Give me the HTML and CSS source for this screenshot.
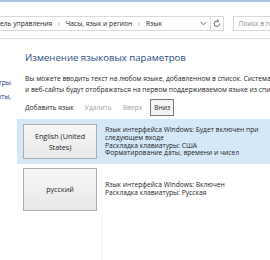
FILE: index.html
```html
<!DOCTYPE html>
<html>

<head>
    <title>Язык</title>
    <meta charset="utf-8">
    <link rel="stylesheet" href="styles.css">
</head>

<body>
    <div class="win-frame"></div>
    <div class="win-nav">
        <div class="win-address">
            <span class="win-crumbs">ель управления <i>›</i> Часы, язык и регион <i>›</i> Язык</span>
            <span class="win-drop">
                <svg width="7" height="5" viewBox="0 0 7 5"><path d="M0.5 0.8 L3.5 3.8 L6.5 0.8" fill="none" stroke="#6d6d6d" stroke-width="1"/></svg>
            </span>
            <span class="win-refresh">
                <svg width="8" height="9" viewBox="0 0 8 9"><path d="M6.6 4.6 A2.7 2.7 0 1 1 4 2 L5.2 2" fill="none" stroke="#6d6d6d" stroke-width="1"/><path d="M4.2 0.5 L5.8 2 L4.2 3.5" fill="none" stroke="#6d6d6d" stroke-width="1"/></svg>
            </span>
        </div>
        <div class="win-search">Поиск в п</div>
    </div>
    <div class="win-body">
        <div class="win-side">
            <div class="win-side-link"><span>Дополнительные параметры</span></div>
            <div class="win-side-link"><span>Изменение форматов даты,</span></div>
        </div>
        <div class="win-main">
            <h2>Изменение языковых параметров</h2>
            <p class="win-intro">Вы можете вводить текст на любом языке, добавленном в список. Система<br>и веб-сайты будут отображаться на первом поддерживаемом языке из списка.</p>
            <div class="win-tools">
                <span class="win-tool">Добавить язык</span>
                <span class="win-tool off">Удалить</span>
                <span class="win-tool off">Вверх</span>
                <span class="win-tool focus">Вниз</span>
            </div>
            <div class="win-list">
                <div class="win-row selected">
                    <div class="win-lang">English (United<br>States)</div>
                    <div class="win-desc">
                        Язык интерфейса Windows: Будет включен при<br>
                        следующем входе<br>
                        Раскладка клавиатуры: США<br>
                        Форматирование даты, времени и чисел
                    </div>
                </div>
                <div class="win-row">
                    <div class="win-lang">русский</div>
                    <div class="win-desc">
                        Язык интерфейса Windows: Включен<br>
                        Раскладка клавиатуры: Русская
                    </div>
                </div>
                <div class="win-rest"></div>
            </div>
        </div>
    </div>
</body>

</html>
```

FILE: styles.css
```css
body {
    margin: 0;
    overflow: hidden;
    background: #fff;
    font-family: "Open Sans", "Noto Sans", sans-serif;
    color: #1e1e1e;
    font-size: 6.7px;
}

.win-frame {
    height: 2px;
    background-color: #a9c6e2;
}

.win-nav {
    display: flex;
    align-items: center;
    gap: 9px;
    height: 37px;
    border-bottom: 1px solid #e3e3e3;
    box-sizing: border-box;
}

.win-address {
    display: flex;
    align-items: center;
    width: 226px;
    height: 15px;
    margin-top: 6px;
    border: 1px solid #d9d9d9;
    border-left: none;
    box-sizing: border-box;
}

.win-crumbs {
    flex: 1;
    white-space: nowrap;
}

.win-crumbs i {
    font-style: normal;
    color: #7d7d7d;
    margin: 0 4px;
}

.win-drop {
    display: flex;
    align-items: center;
    height: 100%;
    padding: 0 3px;
    border-right: 1px solid #e3e3e3;
}

.win-refresh {
    display: flex;
    align-items: center;
    height: 100%;
    padding: 0 2px;
}

.win-search {
    flex: 1;
    height: 15px;
    margin-top: 6px;
    padding-left: 5px;
    border: 1px solid #d9d9d9;
    border-right: none;
    box-sizing: border-box;
    color: #8a8a8a;
    line-height: 13px;
    white-space: nowrap;
}

.win-body {
    display: flex;
}

.win-side {
    flex: none;
    width: 17px;
    padding-top: 39px;
}

.win-side-link {
    display: flex;
    justify-content: flex-end;
    width: 11px;
    height: 14px;
    color: #1e3287;
}

.win-side-link span {
    white-space: nowrap;
}

.win-main {
    flex: 1;
    min-width: 0;
}

.win-main h2 {
    margin: 12px 0 0 8px;
    font-size: 9.6px;
    font-weight: normal;
    color: #2b4f81;
}

.win-intro {
    margin: 9px 0 0 8px;
    white-space: nowrap;
    line-height: 11px;
}

.win-tools {
    display: flex;
    align-items: center;
    gap: 11px;
    height: 19px;
    margin: 3px 0 2px 8px;
}

.win-tool.off {
    color: #a3a3a3;
}

.win-tool.focus {
    margin-left: -3px;
    padding: 3px;
    border: 1px solid #7a7a7a;
    background: #f4f4f4;
}

.win-row {
    display: flex;
    align-items: center;
    height: 45px;
    padding-left: 6px;
}

.win-row.selected {
    background-color: #d5e8f8;
}

.win-row + .win-row {
    height: 50px;
}

.win-lang {
    display: flex;
    align-items: center;
    justify-content: center;
    flex: none;
    width: 74px;
    height: 35px;
    box-sizing: border-box;
    border: 1px solid #acacac;
    background: linear-gradient(#f6f6f6, #e9e9e9);
    text-align: center;
    line-height: 11px;
    font-size: 7.2px;
}

.win-row + .win-row .win-lang {
    height: 43px;
}

.win-desc {
    margin-left: 8px;
    line-height: 7.6px;
    white-space: nowrap;
}

.win-rest {
    height: 60px;
    margin-left: 84px;
    border-left: 1px solid #f0f0f0;
}
```
